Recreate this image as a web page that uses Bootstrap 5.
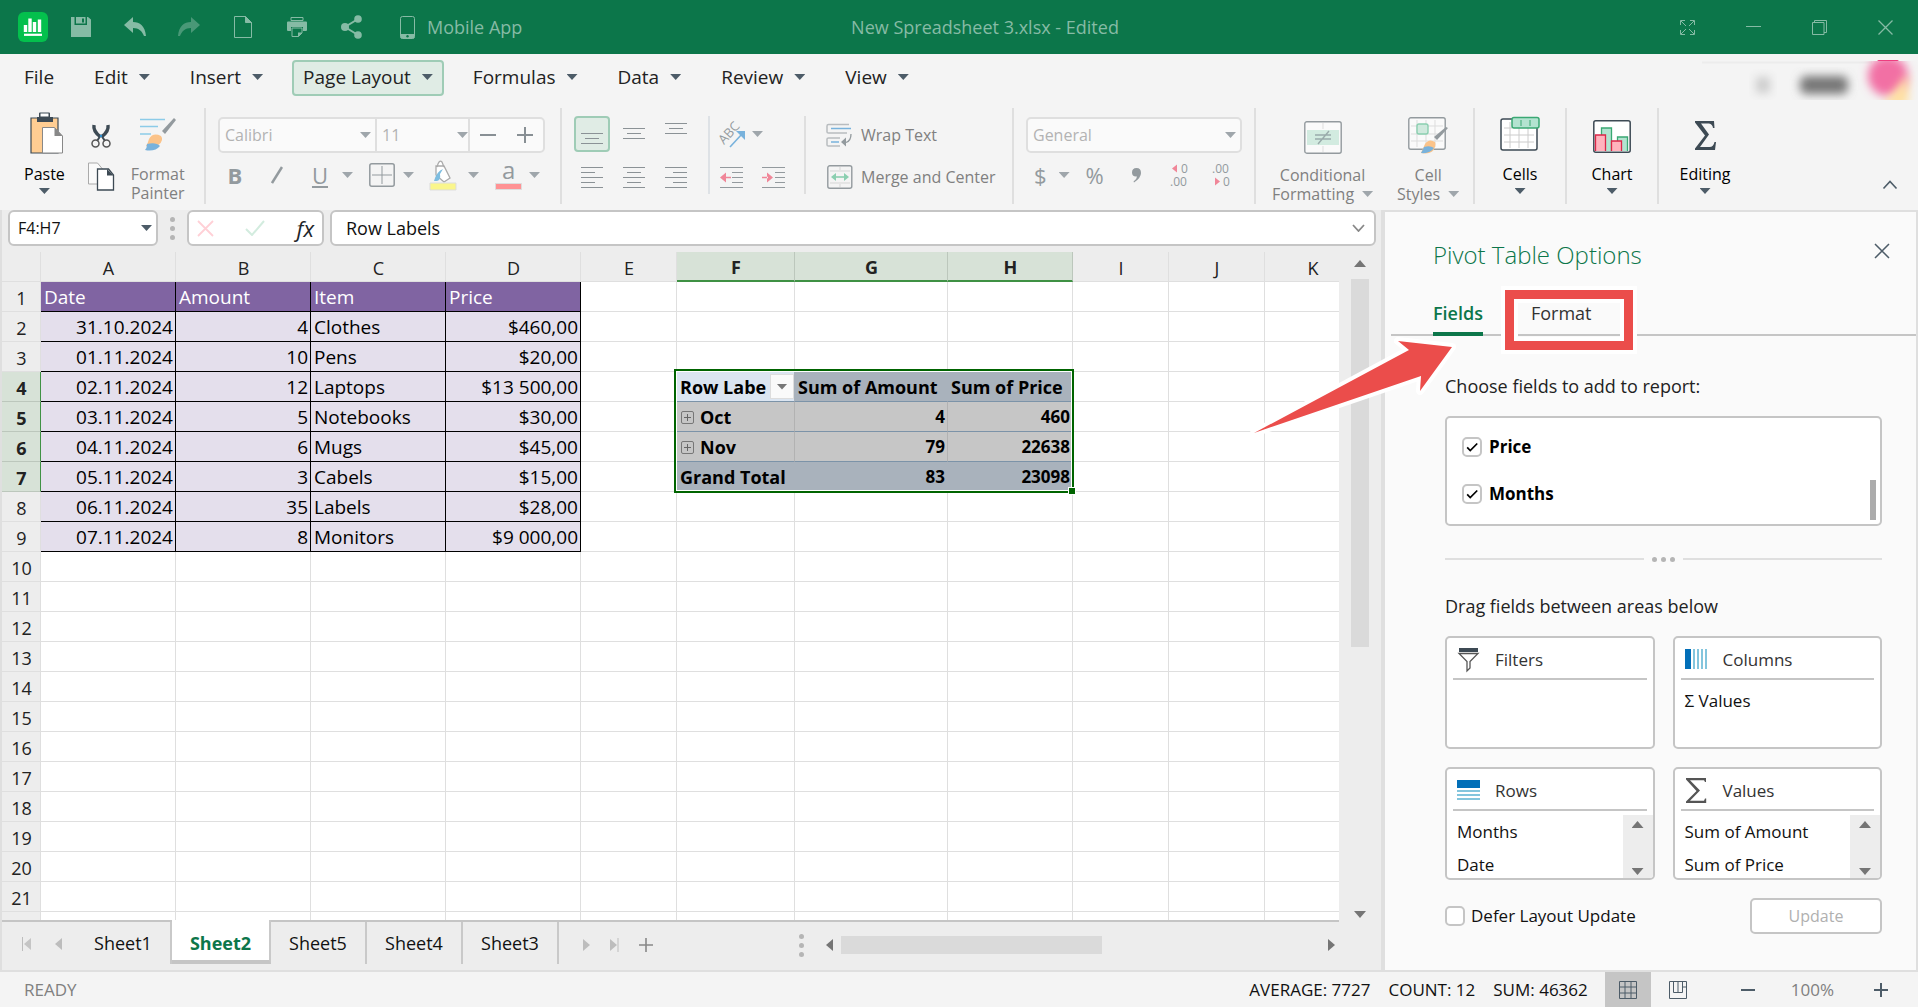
<!DOCTYPE html>
<html lang="en">
<head>
<meta charset="utf-8">
<meta name="viewport" content="width=device-width, initial-scale=1">
<title>New Spreadsheet 3.xlsx</title>
<link rel="stylesheet" href="https://cdn.jsdelivr.net/npm/bootstrap@5.3.0/dist/css/bootstrap.min.css">
<style>
:root{--green:#0c764a;--line:#c5c5c5;--soft:#dfdfdf;--chrome:#f4f4f4;--gutter:#ededed}
body{font-family:"Open Sans","Noto Sans",sans-serif;font-size:18px;line-height:24px;color:#222;background:var(--chrome);overflow:hidden}
button{font-family:inherit}
svg{display:block;flex:none}
.btn{--bs-btn-padding-x:0;--bs-btn-padding-y:0;--bs-btn-font-size:16px;--bs-btn-line-height:19px;--bs-btn-border-radius:4px;--bs-btn-border-width:0;--bs-btn-color:#222}
.caret{width:11px;height:6px;background:#4d5c68;clip-path:polygon(0 0,100% 0,50% 100%);flex:none;display:block}
.off .caret,.caret.off{background:#9fa6ab}
.off{color:#808080}
.titlebar,.menubar,.ribbon,.status,.status-line,.fbar,.sheetbar{flex-shrink:0}
/* title bar */
.titlebar{height:54px;background:var(--green);color:#86bba5;padding:0 0 0 18px}
.titlebar .btn{color:#86bba5}
.side{flex:1 1 0}
.doc-name{padding-left:34px;font-size:18px}
.cell54{width:54px;height:54px}
.cell66{width:66px;height:54px}
/* menu */
.menubar{height:54px;padding:6px 0 0 13px;gap:18px}
.menubar .btn{height:36px;padding:0 10px 2px;border:1px solid transparent;font-size:19px;line-height:24px;gap:11px}
.menubar .btn.current{background:#e0ece5;border:2px solid #9fccb6;padding:0 9px 2px}
/* ribbon */
.ribbon{height:102px}
.grp{height:96px;border-right:2px solid var(--soft);flex:none}
.g-clip{width:206px}.g-font{width:356px;padding:9px 0 0 12px}.g-align{width:146px;padding:8px 0 0 12px}
.g-dir{width:98px;padding:0}.g-wrap{width:208px;padding:9px 0 0 20px}.g-num{width:242px;padding:9px 0 0 12px}
.g-style{width:219px}.g-one{width:92px}.g-short{height:78px;margin-top:8px}
.tool{width:42px;height:36px}
.tool.picked{background:#e0ece5;border:2px solid #9fccb6}
.tool-bold{width:34px;height:36px}.tool-slant{width:50px;height:36px}.tool-under{width:36px;height:36px}
.lbl{font-size:16px;line-height:19px}
.ribbon .lbl-top{margin-top:13px}
.icon-slot{height:44px}
.clip-gap{margin-right:22px}
.cut-copy{gap:14px}
.font-box{height:36px;width:327px;border:2px solid var(--soft);border-radius:5px;background:#fafafa}
.font-box .part{border-right:2px solid var(--soft)}
.part-face{width:157px}.part-size{width:93px}
.num-box{height:36px;width:216px;border:2px solid var(--soft);border-radius:5px;background:#fafafa}
.flat{appearance:none;border:0;background:transparent;width:100%;color:#b3b3b3;font-size:16px;outline:0;padding:0 0 0 5px;opacity:1}
.glyph{font-size:22px;line-height:28px;color:#939a9e}
/* workspace */
.work{border-left:2px solid var(--soft);background:var(--gutter)}
.fbar{height:42px;padding:0 5px 6px 6px}
.fbox{height:36px;background:#fff;border:2px solid var(--line);border-radius:6px}
.fbox input{border:0;outline:0;background:transparent;color:#111;min-width:0}
.name-box{width:150px}.fx-box{width:137px}
.formula-box{margin-left:6px;padding:0 9px 0 14px}
.dots i{width:5px;height:5px;border-radius:50%;background:#b5b5b5;display:block}
.grid-wrap{overflow:hidden;border-bottom:2px solid var(--line);background:#fff}
.sheet{table-layout:fixed;border-collapse:separate;border-spacing:0;width:1358px;line-height:26px;color:#000}
.sheet th,.sheet td{height:30px;padding:0 2px 0 3px;border-right:1px solid var(--soft);border-bottom:1px solid var(--soft);white-space:nowrap;overflow:hidden;vertical-align:middle}
.sheet th{background:var(--gutter);font-weight:400;text-align:center;color:#222;padding-top:2px}
.sheet td{font-size:19px}
.sheet th.hot{background:#d7e2d7;font-weight:700;border-right-color:#bcc7bc}
.sheet thead th.hot{border-bottom:2px solid #3f9144}
.sheet tbody th.hot{border-right:1px solid #3f9144;border-bottom-color:#bcc7bc}
.sheet .ttl{background:#8064a2;color:#fff;border-color:#000}
.sheet .dat{background:#e4dfec;border-color:#000}
.sheet .num{text-align:right}
.sheet .pv{background:#c6c6c6;font-weight:700;font-size:18px;border-right-color:#b2b2b2;border-bottom-color:#7c93a8}
.sheet .pv.num{font-size:17px}
.sheet .pv.band{background:#a9b2bc;border-right-color:#a9b2bc}
.sheet .pv.lead-cell{background:#dbe5f1}
.expander{width:13px;height:13px;border:1px solid #777;border-radius:2px;display:inline-block;vertical-align:0;margin:0 6px 0 1px;background:linear-gradient(#666,#666) center/7px 1px no-repeat,linear-gradient(#666,#666) center/1px 7px no-repeat}
.drop{width:24px;height:25px;background:#fafafa;border:1px solid #ddd}
.drop .caret{background:#777}
.marquee{left:672px;top:117px;width:400px;height:124px;border:2px solid #006400;box-shadow:inset 0 0 0 1px #fff;pointer-events:none}
.marquee::after{content:"";position:absolute;right:-4px;bottom:-4px;width:8px;height:8px;background:#006400;border:1px solid #fff;box-sizing:border-box}
.vscroll{width:42px;gap:12px}
.vthumb{width:18px;height:368px;background:#dadada}
.sheetbar{height:48px}
.tab{height:42px;width:96px;border-right:2px solid #c9c9c9;font-size:18px;color:#111;text-decoration:none;display:flex;align-items:center;justify-content:center}
.tab-nav{width:74px;height:44px}
.tab.active{background:#fff;color:var(--green);font-weight:700;width:99px;border-bottom:4px solid var(--line);margin-top:-2px;height:44px;padding-top:6px}
.hthumb{width:261px;height:18px;background:#dadada}
.tri-u,.tri-d,.tri-l,.tri-r{display:block;background:#757575}
.tri-u,.tri-d{width:12px;height:7px}.tri-l,.tri-r{width:7px;height:12px}
.tri-u{clip-path:polygon(50% 0,100% 100%,0 100%)}.tri-d{clip-path:polygon(0 0,100% 0,50% 100%)}
.tri-l{clip-path:polygon(0 50%,100% 0,100% 100%)}.tri-r{clip-path:polygon(0 0,100% 50%,0 100%)}
.dim{background:#bdbdbd}
.tab-tail{height:46px;padding:0 46px 0 24px}
.tail-gap{margin-left:20px}
.split-dots{margin-left:146px;margin-right:22px}
/* side pane */
.pane{width:537px;border-left:4px solid var(--soft);border-right:2px solid var(--soft);border-top:2px solid var(--soft);background:#fafafa}
.pane h2{font-size:24px;line-height:32px;font-weight:300;color:var(--green);margin:0}
.pane-head{padding:27px 26px 0 48px;height:76px}
.pane-tabs{height:48px;margin-left:6px;padding-left:42px;border-bottom:2px solid var(--line);gap:48px}
.pane-tabs a{color:#333;text-decoration:none;line-height:50px;height:48px}
.pane-tabs a.active{color:var(--green);font-weight:600;border-bottom:4px solid var(--green)}
.pane-body{padding:0 34px 0 60px}
.hint-a{padding:38px 0 18px}.hint-b{padding:2px 0 18px}
.field-list{height:110px;border:2px solid var(--line);border-radius:5px;background:#fff;padding:5px 4px 0 15px;color:#000}
.check{appearance:none;width:20px;height:20px;border:2px solid var(--line);border-radius:5px;background:#fff;margin:0;flex:none}
.check:checked{background:#fff url("data:image/svg+xml,%3Csvg xmlns='http://www.w3.org/2000/svg' viewBox='0 0 16 16'%3E%3Cpath d='M2.500 8.500l3.500 3.500 8-8' fill='none' stroke='%23000' stroke-width='2'/%3E%3C/svg%3E") center/14px no-repeat}
.field-row{height:47px;gap:7px;font-weight:700;font-size:17px}
.field-thumb{width:6px;height:40px;background:#acacac}
.splitter{height:66px}
.rule{height:2px;background:var(--soft)}
.areas{display:grid;grid-template-columns:1fr 1fr;gap:18px}
.area{height:113px;border:2px solid var(--line);border-radius:5px;background:#fff;font-size:17px;color:#111;overflow:hidden}
.area-head{height:42px;border-bottom:2px solid var(--line);margin:0 6px;padding:3px 0 0 4px;gap:14px;color:#333}
.area-head svg{width:24px;height:26px}
.area-list{line-height:33px;padding-left:10px}
.area-scroll{width:30px;margin-top:4px;background:var(--gutter);padding:6px 0}
.pane-foot{margin-top:18px}
.pane-foot label{gap:6px;font-size:17px;color:#111}
.btn.update{width:132px;height:36px;border:2px solid var(--line);background:#fff;color:#b0b0b0;border-radius:5px;opacity:1}
/* callouts drawn over the pane */
.callout{left:116px;top:74px;width:136px;height:68px;border:4px solid #fff;pointer-events:none}
.callout i{display:block;height:100%;border:9px solid #eb4d4b;box-shadow:inset 0 0 0 4px #fff}
.arrow{left:-136px;top:118px;pointer-events:none}
/* status bar */
.status{height:35px;font-size:17px;color:#111;padding-right:10px}
.status .stats{gap:18px;padding-right:17px}
.status-line{height:2px;background:var(--soft)}
.view-btn{width:46px;height:35px}
.view-btn.current{background:#c5c5c5}
</style>
</head>
<body>
<div class="d-flex flex-column vh-100">

<header class="titlebar d-flex align-items-center">
  <div class="side d-flex align-items-center">
    <svg width="30" height="30" viewBox="0 0 30 30"><rect width="30" height="30" rx="6" fill="#04c04d"/><path d="M7.500 13v7M12 6.500V20M16.500 10V20M21.500 7.500V20" stroke="#fff" stroke-width="3.400"/><path d="M6 22.800h18" stroke="#fff" stroke-width="2.200"/></svg>
    <button class="btn cell54 d-flex align-items-center justify-content-center ms-1" aria-label="Save"><svg class="ms-1" width="20" height="20" viewBox="0 0 20 20" fill="currentColor"><path d="M0 0h3.500v8h12.500V0H17l3 2.500V20H0z"/><path d="M5 0h9.500v6.500H5z"/><path d="M11 1.500h2v4h-2z" fill="#0c764a"/></svg></button>
    <button class="btn cell54 d-flex align-items-center justify-content-center" aria-label="Undo"><svg class="ms-1" width="22" height="20" viewBox="0 0 22 20" fill="currentColor"><path d="M0 8L9 0v5c7 0 12 4 13 14h-2c-2-5-5-8-11-8v5z"/></svg></button>
    <button class="btn cell54 d-flex align-items-center justify-content-center opacity-50" aria-label="Redo"><svg class="ms-1" width="22" height="20" viewBox="0 0 22 20" fill="currentColor"><path d="M22 8L13 0v5C6 5 1 9 0 19h2c2-5 5-8 11-8v5z"/></svg></button>
    <button class="btn cell54 d-flex align-items-center justify-content-center" aria-label="New"><svg class="ms-1" width="18" height="22" viewBox="0 0 18 22" fill="none" stroke="currentColor"><path d="M.5.500h11l6 6V21.500H.500z"/><path d="M11.500.500v6h6z" fill="currentColor"/></svg></button>
    <button class="btn cell54 d-flex align-items-center justify-content-center" aria-label="Print"><svg class="ms-1" width="20" height="20" viewBox="0 0 20 20" fill="currentColor"><path d="M4 .5h12v3H4z" fill="none" stroke="currentColor"/><path d="M1 4.500h18q1 0 1 1V13q0 1-1 1h-3v-4H4v4H1q-1 0-1-1V5.500q0-1 1-1z"/><path d="M5 11h10v5l-3.500 3.500H5z" fill="none" stroke="currentColor"/><path d="M15 15.500h-4V20z"/></svg></button>
    <button class="btn cell54 d-flex align-items-center justify-content-center" aria-label="Share"><svg class="ms-1" width="21" height="24" viewBox="0 0 21 24" fill="currentColor"><path d="M17 4L4 12l13 8" fill="none" stroke="currentColor" stroke-width="2"/><circle cx="17" cy="4" r="3.800"/><circle cx="4" cy="12" r="4"/><circle cx="17" cy="20" r="3.800"/></svg></button>
    <button class="btn d-flex align-items-center gap-2 ms-3 ps-1"><svg class="ms-1" width="15" height="23" viewBox="0 0 15 23"><rect x=".5" y=".5" width="14" height="22" rx="2" fill="none" stroke="currentColor"/><path d="M.5 18h14v3q0 1.500-2 1.500h-10q-2 0-2-1.500z" fill="currentColor"/><circle cx="7.500" cy="20.300" r="1.200" fill="#0c764a"/></svg><span class="doc-name ps-1">Mobile App</span></button>
  </div>
  <div class="doc-name">New Spreadsheet 3.xlsx - Edited</div>
  <div class="side d-flex justify-content-end">
    <button class="btn cell66 d-flex align-items-center justify-content-center" aria-label="Full screen"><svg width="15" height="15" viewBox="0 0 15 15" fill="none" stroke="currentColor"><path d="M.5 5V.500H5M10 .5h4.500V5M14.500 10v4.500H10M5 14.500H.500V10M1 1l5 5M14 1L9 6M1 14l5-5M14 14L9 9"/></svg></button>
    <button class="btn cell66 d-flex align-items-center justify-content-center" aria-label="Minimize"><svg width="15" height="2" viewBox="0 0 15 2"><path d="M0 .5h15" stroke="currentColor"/></svg></button>
    <button class="btn cell66 d-flex align-items-center justify-content-center" aria-label="Restore"><svg width="15" height="15" viewBox="0 0 15 15" fill="none" stroke="currentColor"><path d="M.5 2.500h11.500v12H.500zM2.500 2.500v-2h12v12h-2.500"/></svg></button>
    <button class="btn cell66 d-flex align-items-center justify-content-center" aria-label="Close"><svg width="15" height="15" viewBox="0 0 15 15"><path d="M.5.500l14 14M14.500.500l-14 14" stroke="currentColor" stroke-width="1.300"/></svg></button>
  </div>
</header>

<nav class="menubar d-flex align-items-start">
  <button class="btn d-flex align-items-center">File</button>
  <button class="btn d-flex align-items-center">Edit<i class="caret"></i></button>
  <button class="btn d-flex align-items-center">Insert<i class="caret"></i></button>
  <button class="btn current d-flex align-items-center">Page Layout<i class="caret"></i></button>
  <button class="btn d-flex align-items-center">Formulas<i class="caret"></i></button>
  <button class="btn d-flex align-items-center">Data<i class="caret"></i></button>
  <button class="btn d-flex align-items-center">Review<i class="caret"></i></button>
  <button class="btn d-flex align-items-center">View<i class="caret"></i></button>
  <svg class="ms-auto" width="216" height="46" viewBox="0 0 216 46"><defs><filter id="soft" x="-50%" y="-50%" width="200%" height="200%"><feGaussianBlur stdDeviation="5"/></filter><clipPath id="low"><rect y="1" width="216" height="39"/></clipPath></defs><path d="M0 2.500h170" stroke="#ececec" stroke-width="2"/><g clip-path="url(#low)"><rect x="54" y="17" width="14" height="16" fill="#ccc" filter="url(#soft)"/><rect x="98" y="16" width="48" height="18" rx="6" fill="#777" filter="url(#soft)"/><circle cx="186" cy="16" r="20" fill="#f26fa4" filter="url(#soft)"/><path d="M180 46l26-32v32z" fill="#ffe0a0" filter="url(#soft)"/></g><path d="M175 1q11-8 22 0z" fill="#ee3d7f"/></svg>
</nav>

<section class="ribbon d-flex align-items-start">
  <div class="grp g-clip d-flex">
    <button class="btn clip-gap d-flex flex-column align-items-center ps-4"><span class="icon-slot pt-1"><svg class="ms-1" width="34" height="42" viewBox="0 0 34 42"><path d="M2 6h27v35H2z" fill="#ffcd92" stroke="#3d4a54" stroke-width="1.200"/><path d="M10 5V1.500q0-1 1-1h9q1 0 1 1V5h3v5H8V5z" fill="#3d4a54"/><rect x="11.500" y="1.500" width="8" height="3" fill="#fff"/><path d="M13.500 15.500h12l8 8.500v17h-20z" fill="#fff" stroke="#888"/><path d="M25.500 15.500l8 8.500h-8z" fill="#888"/></svg></span><span class="lbl lbl-top text-black">Paste</span><i class="caret mt-1"></i></button>
    <div class="cut-copy me-3 d-flex flex-column align-items-center pt-3">
      <button class="btn" aria-label="Cut"><svg width="20" height="24" viewBox="0 0 20 24"><path d="M3 1q-1 6 6 11.500M17 1q1 6-6 11.500" stroke="#3d4a54" stroke-width="3.400" fill="none"/><path d="M10 11l-4 6M10 11l4 6" stroke="#3d4a54" stroke-width="2"/><circle cx="4.500" cy="19.500" r="3.500" fill="none" stroke="#555" stroke-width="1.500"/><circle cx="15.500" cy="19.500" r="3.500" fill="none" stroke="#555" stroke-width="1.500"/><circle cx="10" cy="12" r="1.200" fill="#2b8fd0"/></svg></button>
      <button class="btn" aria-label="Copy"><svg width="28" height="29" viewBox="0 0 28 29"><path d="M1.500 1h9l5 6v15h-14z" fill="#fafafa" stroke="#aaa"/><path d="M10.500 7h11l5 6v15h-16z" fill="#fff" stroke="#3d4a54" stroke-width="1.300"/><path d="M20 7l6.500 6.500H20z" fill="#3d4a54"/></svg></button>
    </div>
    <button class="btn off d-flex flex-column align-items-center"><span class="icon-slot pt-2"><svg width="37" height="36" viewBox="0 0 37 36"><path d="M1 3.500h25M1 10.500h18M1 18h11" stroke="#8ccbe8" stroke-width="1.500"/><path d="M35 2l-12 13 3 3L37 4z" fill="#939a9e"/><path d="M22 20q-8-4-12 3-1 4-3 7 14 2 16-6 .5-2-1-4z" fill="#fbc389"/><path d="M8 28q9-2 13 2-5 6-15 4 2-2 2-6z" fill="#78b2dc"/></svg></span><span class="lbl lbl-top">Format<br>Painter</span></button>
  </div>

  <div class="grp g-font">
    <div class="font-box d-flex align-items-stretch">
      <label class="part part-face d-flex align-items-center pe-1"><input class="flat" value="Calibri" aria-label="Font" disabled><i class="caret off"></i></label>
      <label class="part part-size d-flex align-items-center"><input class="flat" value="11" aria-label="Font size" disabled><i class="caret off"></i></label>
      <button class="btn flex-fill d-flex align-items-center justify-content-center" aria-label="Smaller"><svg width="16" height="2"><path d="M0 1h16" stroke="#888f94" stroke-width="2"/></svg></button>
      <button class="btn flex-fill d-flex align-items-center justify-content-center" aria-label="Larger"><svg width="16" height="16"><path d="M0 8h16M8 0v16" stroke="#888f94" stroke-width="2"/></svg></button>
    </div>
    <div class="d-flex align-items-center off mt-1">
      <button class="btn tool-bold glyph fw-bold">B</button>
      <button class="btn tool-slant d-flex align-items-center justify-content-center" aria-label="Italic"><svg width="12" height="18"><path d="M1 17L11 1" stroke="#939a9e" stroke-width="2.500"/></svg></button>
      <button class="btn tool-under glyph text-decoration-underline">U</button><i class="caret ms-1"></i>
      <button class="btn tool d-flex align-items-center justify-content-center ms-2" aria-label="Borders"><svg width="26" height="24" viewBox="0 0 26 24"><rect x=".8" y=".8" width="24.400" height="22.400" rx="2" fill="none" stroke="#939a9e" stroke-width="1.500"/><path d="M13 3v18M3 12h20" stroke="#939a9e"/></svg></button><i class="caret"></i>
      <button class="btn tool d-flex align-items-center justify-content-center ms-2" aria-label="Fill colour"><svg width="28" height="32" viewBox="0 0 28 32"><path d="M7 7l8 0 6 12-6 4-8-7zM8 8Q10 0 13 3l2 5" fill="#fff" stroke="#aaa" stroke-width="1.300"/><path d="M14 10q-6 2-9 12h3q4-1 3-7z" fill="#7dbde0"/><path d="M1 24h26v7H1z" fill="#faf68c" stroke="#ddd"/></svg></button><i class="caret ms-1"></i>
      <button class="btn tool d-flex flex-column align-items-center justify-content-center ms-2" aria-label="Text colour"><svg width="27" height="36" viewBox="0 0 27 36"><text x="7" y="22" font-size="24" fill="#939a9e">a</text><path d="M.5 26.500h26v6H.500z" fill="#ff9294" stroke="#ddd"/></svg></button><i class="caret"></i>
    </div>
  </div>

  <div class="grp g-align border-end-0 off" id="alignTools"></div>

  <div class="grp g-dir g-short border-start border-2 off">
    <div class="d-flex align-items-center">
      <button class="btn tool" aria-label="Orientation"><svg class="m-auto" width="38" height="36" viewBox="0 0 38 36"><text x="12" y="29" transform="rotate(-48 12 29)" font-size="13" fill="#939a9e">ABC</text><path d="M18 31L30 18" stroke="#78b2dc" stroke-width="1.600"/><path d="M24 15h9v9z" fill="#78b2dc"/></svg></button><i class="caret"></i>
    </div>
    <div class="d-flex mt-2">
      <button class="btn tool" aria-label="Decrease indent"><svg class="m-auto" width="24" height="24" viewBox="0 0 24 24"><path d="M1 1.500h23M13 6.500h11M13 11.500h11M13 16.500h11M1 21.500h23" stroke="#939a9e"/><path d="M1 11.500l6-5v10zM6 10.800h6v1.500H6z" fill="#f08698"/></svg></button>
      <button class="btn tool" aria-label="Increase indent"><svg class="m-auto" width="24" height="24" viewBox="0 0 24 24"><path d="M1 1.500h23M14 6.500h10M14 11.500h10M14 16.500h10M1 21.500h23" stroke="#939a9e"/><path d="M12 11.500l-6-5v10zM1 10.800h6v1.500H1z" fill="#f08698"/></svg></button>
    </div>
  </div>

  <div class="grp g-wrap off">
    <button class="btn tool w-auto off d-flex align-items-center gap-2"><svg width="27" height="24" viewBox="0 0 27 24" fill="none"><path d="M23 1.500H2.500q-1.500 0-1.500 1.500v6q0 1 1.500 1H21M14 15H2.500Q1 15 1 16v6q0 1 1.500 1H14" stroke="#b8bcbf" stroke-width="1.500"/><path d="M5 5.500h20M5 19h8" stroke="#78b2dc" stroke-width="1.600"/><path d="M25 11q0 7-5 8.500" stroke="#939a9e" stroke-width="1.300"/><path d="M15 19l5-4.500v9z" fill="#939a9e"/></svg>Wrap Text</button>
    <button class="btn tool w-auto off d-flex align-items-center gap-2 mt-1 pt-1"><svg width="27" height="24" viewBox="0 0 27 24" fill="none"><rect x="1.800" y=".8" width="24" height="22.400" rx="2" stroke="#939a9e" stroke-width="1.400"/><path d="M4 6h20M4 18h20M14 2v3M14 19v3" stroke="#d5d5d5"/><path d="M8 12h12" stroke="#8bcfb0" stroke-width="1.600"/><path d="M5 12l5-4v8zM23 12l-5-4v8z" fill="#8bcfb0"/></svg>Merge and Center</button>
  </div>

  <div class="grp g-num off">
    <label class="num-box d-flex align-items-center pe-1"><select class="flat" aria-label="Number format" disabled><option>General</option></select><i class="caret"></i></label>
    <div class="d-flex align-items-center mt-1">
      <button class="btn glyph px-2">$</button><i class="caret ms-1"></i>
      <button class="btn glyph tool ms-1">%</button>
      <button class="btn tool d-flex align-items-center justify-content-center" aria-label="Thousands"><svg width="10" height="15" viewBox="0 0 10 15"><path d="M4.500 0Q9 0 9 5t-7 9.500l-.500-1Q5 11 5 8.500 0 9 0 4.500 0 0 4.500 0z" fill="#939a9e"/></svg></button>
      <button class="btn tool" aria-label="Increase decimal"><svg class="m-auto" width="26" height="30" viewBox="0 0 26 30" font-size="12" fill="#939a9e"><text x="15" y="13">0</text><text x="4" y="26">.00</text><path d="M11 4.500v8L6 8.500z" fill="#f08698"/></svg></button>
      <button class="btn tool" aria-label="Decrease decimal"><svg class="m-auto" width="26" height="30" viewBox="0 0 26 30" font-size="12" fill="#939a9e"><text x="4" y="13">.00</text><text x="15" y="26">0</text><path d="M7 17.500v8l5-4z" fill="#f08698"/></svg></button>
    </div>
  </div>

  <div class="grp g-style d-flex off">
    <button class="btn off text-center px-3"><span class="icon-slot d-flex justify-content-center pt-2"><svg class="mt-1" width="38" height="33" viewBox="0 0 38 33"><rect x=".8" y=".8" width="36.400" height="31.400" rx="2" fill="#fafafa" stroke="#939a9e" stroke-width="1.400"/><path d="M3 9h32v15H3z" fill="#d2ebe0"/><path d="M19 2v6M19 25v6" stroke="#ddd"/><path d="M11 14h16M11 18h16M25 10l-11 13" stroke="#9aa" stroke-width="1.400"/></svg></span><span class="lbl lbl-top d-block">Conditional</span><span class="lbl d-flex align-items-center justify-content-center gap-2">Formatting<i class="caret"></i></span></button>
    <button class="btn off text-center ps-2"><span class="icon-slot d-flex justify-content-center pt-2"><svg width="42" height="38" viewBox="0 0 42 38"><rect x="1.800" y=".8" width="36.400" height="31.400" rx="2" fill="#fafafa" stroke="#939a9e" stroke-width="1.400"/><path d="M10 3v27M19 3v27M28 3v27M4 9h32M4 17h32M4 24h32" stroke="#ddd"/><rect x="10" y="7" width="11" height="10" rx="2" fill="#cfe9dd" stroke="#8bcfb0" stroke-width="1.400"/><path d="M41 11L30 23l-3-3 12-10z" fill="#939a9e"/><path d="M28 25q-6-4-10 2l-4 9q12 2 14-6 1-3 0-5z" fill="#fbc389"/><path d="M17 30q6-2 10 1-4 6-13 5 2-3 3-6z" fill="#78b2dc"/></svg></span><span class="lbl lbl-top d-block">Cell</span><span class="lbl d-flex align-items-center justify-content-center gap-2">Styles<i class="caret"></i></span></button>
  </div>

  <div class="grp g-one"><button class="btn text-black d-flex flex-column align-items-center w-100"><span class="icon-slot pt-2"><svg width="40" height="36" viewBox="0 0 40 36"><rect x="1" y="3" width="36" height="31" rx="2" fill="#fff" stroke="#3d4a54" stroke-width="1.500"/><path d="M10 6v26M19 6v26M28 12v20M4 12h8M4 19h30M4 26h30" stroke="#ccc"/><rect x="12" y="1.500" width="27" height="10.500" rx="2" fill="#b3e3d0" stroke="#3aa873" stroke-width="1.500"/><path d="M21 4v6M30 4v6" stroke="#3aa873"/></svg></span><span class="lbl lbl-top">Cells</span><i class="caret mt-1"></i></button></div>
  <div class="grp g-one"><button class="btn text-black d-flex flex-column align-items-center w-100"><span class="icon-slot pt-2"><svg class="mt-1" width="38" height="33" viewBox="0 0 38 33"><rect x=".8" y=".8" width="36.400" height="31.400" rx="2" fill="#fff" stroke="#3d4a54" stroke-width="1.500"/><path d="M8.500 31V8h10v23M24.500 31V17h10v14" fill="#b3e3d0" stroke="#3aa873" stroke-width="1.300"/><path d="M2.500 31V15h10v16M18.500 31V21h10v10" fill="#ffb3bd" stroke="#dc2648" stroke-width="1.300"/></svg></span><span class="lbl lbl-top">Chart</span><i class="caret mt-1"></i></button></div>
  <div class="grp g-one border-0"><button class="btn text-black d-flex flex-column align-items-center w-100"><span class="icon-slot pt-2"><svg class="mt-1" width="22" height="31" viewBox="0 0 22 31"><path d="M1 1h19l.5 7H19q-.5-4-4-4.500H7l8 11L6 27h9.500q4 0 5-5H22l-1 8H1v-1.500L11 15.500 1 2.500z" fill="#3d4a54"/></svg></span><span class="lbl lbl-top">Editing</span><i class="caret mt-1"></i></button></div>
  <button class="btn ms-auto px-3 pb-3 me-1 align-self-end" aria-label="Collapse ribbon"><svg class="mb-1" width="16" height="10" viewBox="0 0 16 10"><path d="M1.500 8.500L8 1.500l6.500 7" fill="none" stroke="#4d5c68" stroke-width="1.600"/></svg></button>
</section>

<main class="d-flex flex-fill overflow-hidden">
  <div class="work d-flex flex-column flex-fill overflow-hidden">
    <div class="fbar d-flex">
      <label class="fbox name-box d-flex align-items-center px-2 pe-1"><input class="w-100 p-0 fs-6" value="F4:H7" aria-label="Name box"><i class="caret"></i></label>
      <span class="dots d-flex flex-column align-items-center justify-content-center gap-1 px-2 mx-1"><i></i><i></i><i></i></span>
      <div class="fbox fx-box d-flex align-items-center justify-content-between px-2">
        <svg width="17" height="17"><path d="M1 1l15 15M16 1L1 16" stroke="#ffd0d6" stroke-width="1.800"/></svg>
        <svg width="20" height="16"><path d="M1 9l6 6L19 1" fill="none" stroke="#d3ecdf" stroke-width="2"/></svg>
        <span class="glyph fst-italic text-dark">fx</span>
      </div>
      <label class="fbox formula-box flex-fill d-flex align-items-center"><input class="flex-fill p-0" value="Row Labels" aria-label="Formula"><svg width="13" height="8"><path d="M1 1l5.500 6L12 1" fill="none" stroke="#888" stroke-width="1.800"/></svg></label>
    </div>
    <div class="d-flex flex-fill overflow-hidden">
      <div class="grid-wrap flex-fill position-relative">
        <table class="sheet" id="sheet"></table>
        <div class="marquee position-absolute"></div>
      </div>
      <div class="vscroll d-flex flex-column align-items-center flex-shrink-0 pt-2 pb-1"><i class="tri-u"></i><i class="vthumb"></i><i class="tri-d mt-auto"></i></div>
    </div>
    <div class="sheetbar d-flex align-items-start">
      <div class="tab-nav d-flex align-items-center ps-3"><svg class="ms-1" width="9" height="14"><path d="M.5 0v14" stroke="#bdbdbd"/><path d="M9 1v12L2 7z" fill="#c5c5c5"/></svg><i class="tri-l dim ms-4"></i></div>
      <a class="tab" href="#">Sheet1</a><a class="tab active position-relative" href="#">Sheet2</a><a class="tab" href="#">Sheet5</a><a class="tab" href="#">Sheet4</a><a class="tab" href="#">Sheet3</a>
      <div class="tab-tail d-flex align-items-center flex-fill"><i class="tri-r dim"></i><i class="tri-r dim tail-gap"></i><svg width="2" height="14"><path d="M1 0v14" stroke="#bdbdbd"/></svg><svg class="tail-gap" width="14" height="14"><path d="M0 7h14M7 0v14" stroke="#888" stroke-width="1.600"/></svg>
        <span class="dots split-dots d-flex flex-column gap-1"><i></i><i></i><i></i></span><i class="tri-l me-2"></i><i class="hthumb"></i><i class="tri-r ms-auto"></i></div>
    </div>
  </div>

  <aside class="pane position-relative flex-shrink-0">
    <div class="pane-head d-flex justify-content-between align-items-start"><h2>Pivot Table Options</h2><button class="btn" aria-label="Close pane"><svg class="mt-1" width="16" height="16"><path d="M1 1l14 14M15 1L1 15" stroke="#4d5c68" stroke-width="1.500"/></svg></button></div>
    <nav class="pane-tabs d-flex position-relative"><a class="active" href="#">Fields</a><a href="#">Format</a></nav>
    <div class="position-absolute callout"><i></i></div>
    <svg class="position-absolute arrow" width="220" height="120" viewBox="0 0 220 120"><path d="M5 103L160 20 149 11 203 17 171 61 172 46Z" fill="#eb4d4b" stroke="#fff" stroke-width="8" stroke-linejoin="round" paint-order="stroke"/></svg>
    <div class="pane-body">
      <div class="hint-a">Choose fields to add to report:</div>
      <div class="field-list d-flex justify-content-between">
        <div><label class="field-row d-flex align-items-center"><input class="check" type="checkbox" checked>Price</label><label class="field-row d-flex align-items-center"><input class="check" type="checkbox" checked>Months</label></div>
        <i class="field-thumb align-self-end mb-1"></i>
      </div>
      <div class="splitter d-flex align-items-center gap-2"><span class="rule flex-fill"></span><span class="dots d-flex gap-1"><i></i><i></i><i></i></span><span class="rule flex-fill"></span></div>
      <div class="hint-b">Drag fields between areas below</div>
      <div class="areas">
        <div class="area"><div class="area-head d-flex align-items-center"><svg viewBox="0 0 24 26"><path d="M2 1h19v4H2z" fill="#3d4a54"/><path d="M2 6.500h19L13 14.500v6.500l-3 3V14.500z" fill="#fff" stroke="#555" stroke-width="1.300"/></svg>Filters</div></div>
        <div class="area"><div class="area-head d-flex align-items-center"><svg viewBox="0 0 24 26"><path d="M0 2h6v20H0z" fill="#026fb8"/><path d="M9 2v20M13 2v20M17 2v20M21 2v20" stroke="#83c5dd" stroke-width="2"/></svg>Columns</div><div class="area-list pt-1">Σ Values</div></div>
        <div class="area"><div class="area-head d-flex align-items-center"><svg viewBox="0 0 24 26"><path d="M0 2h23v8H0z" fill="#026fb8"/><path d="M0 13h23M0 17h23M0 21h23" stroke="#83c5dd" stroke-width="2"/></svg>Rows</div><div class="d-flex justify-content-between"><div class="area-list pt-1">Months<br>Date</div><div class="area-scroll d-flex flex-column align-items-center justify-content-between"><i class="tri-u"></i><i class="tri-d"></i></div></div></div>
        <div class="area"><div class="area-head d-flex align-items-center"><svg viewBox="0 0 24 26"><path d="M1 0h20v4h-1l-1-1.800H5L15 12.500 5 22.800h14l1-2.300h1.200V25H1v-1.500L11.500 13 1 1.500z" fill="#555"/></svg>Values</div><div class="d-flex justify-content-between"><div class="area-list pt-1">Sum of Amount<br>Sum of Price</div><div class="area-scroll d-flex flex-column align-items-center justify-content-between"><i class="tri-u"></i><i class="tri-d"></i></div></div></div>
      </div>
      <div class="pane-foot d-flex align-items-center justify-content-between"><label class="d-flex align-items-center"><input class="check" type="checkbox">Defer Layout Update</label><button class="btn update" disabled>Update</button></div>
    </div>
  </aside>
</main>

<div class="status-line"></div>
<footer class="status d-flex align-items-center">
  <span class="off ps-4 me-auto">READY</span>
  <div class="stats d-flex"><span>AVERAGE: 7727</span><span>COUNT: 12</span><span>SUM: 46362</span></div>
  <button class="btn view-btn current rounded-0 d-flex align-items-center justify-content-center" aria-label="Normal view"><svg width="18" height="18" fill="none" stroke="#4d5c68"><path d="M.5.500h17v17H.500zM6 .5v17M12 .5v17M.5 6h17M.5 12h17"/></svg></button>
  <button class="btn view-btn d-flex align-items-center justify-content-center ms-1" aria-label="Page view"><svg width="18" height="18" fill="none" stroke="#4d5c68"><path d="M.5.500h17v17H.500zM4.500.500v11h9V.500M9 .5v11M13.500 6h4"/></svg></button>
  <button class="btn view-btn d-flex align-items-center justify-content-center ms-4" aria-label="Zoom out"><svg width="14" height="2"><path d="M0 1h14" stroke="#4d5c68" stroke-width="2"/></svg></button>
  <span class="text-center off px-3 ms-1 me-2">100%</span>
  <button class="btn view-btn d-flex align-items-center me-1 ps-3" aria-label="Zoom in"><svg width="14" height="14"><path d="M0 7h14M7 0v14" stroke="#4d5c68" stroke-width="2"/></svg></button>
</footer>
</div>

<script>
const lineIcon = rows => '<svg class="m-auto" width="24" height="24" viewBox="0 0 24 24"><path d="' +
  rows.map(([x1, x2, y]) => `M${x1} ${y}H${x2}`).join('') + '" stroke="#8b9296"/></svg>';
const aligns = [
  ['Bottom', [[1,23,11.5],[5,19,16.5],[1,23,21.5]]], ['Middle', [[1,23,6.5],[5,19,11.5],[1,23,16.5]]], ['Top', [[1,23,1.5],[5,19,6.5],[1,23,11.5]]],
  ['Left', [[1,23,1.5],[1,15,6.5],[1,23,11.5],[1,15,16.5],[1,23,21.5]]],
  ['Centre', [[1,23,1.5],[5,19,6.5],[1,23,11.5],[5,19,16.5],[1,23,21.5]]],
  ['Right', [[1,23,1.5],[9,23,6.5],[1,23,11.5],[9,23,16.5],[1,23,21.5]]]
];
const alignBtn = ([name, rows], i) => `<button class="btn tool${i === 0 ? ' picked' : ''} d-flex align-items-center" style="width:${i % 3 ? 42 : 36}px;margin-right:${i % 3 ? 0 : 3}px" aria-label="${name}">${lineIcon(rows)}</button>`;
document.getElementById('alignTools').innerHTML =
  `<div class="d-flex">${aligns.slice(0, 3).map(alignBtn).join('')}</div><div class="d-flex mt-2">${aligns.slice(3).map((a, i) => alignBtn(a, i + 3)).join('')}</div>`;

const widths = [39,135,135,135,135,96,118,153,125,96,96,96];
const letters = 'ABCDEFGHIJK'.split('');
const orders = [['Date','Amount','Item','Price'],['31.10.2024','4','Clothes','$460,00'],['01.11.2024','10','Pens','$20,00'],['02.11.2024','12','Laptops','$13 500,00'],['03.11.2024','5','Notebooks','$30,00'],['04.11.2024','6','Mugs','$45,00'],['05.11.2024','3','Cabels','$15,00'],['06.11.2024','35','Labels','$28,00'],['07.11.2024','8','Monitors','$9 000,00']];
const pivot = [['Row Labe','Sum of Amount','Sum of Price'],['Oct','4','460'],['Nov','79','22638'],['Grand Total','83','23098']];
let html = '<colgroup>' + widths.map(w => `<col style="width:${w}px">`).join('') + '</colgroup><thead><tr><th></th>' +
  letters.map((l, i) => `<th${i > 4 && i < 8 ? ' class="hot"' : ''}>${l}</th>`).join('') + '</tr></thead><tbody>';
for (let r = 0; r < 21; r++) {
  html += `<tr><th${r > 2 && r < 7 ? ' class="hot"' : ''}>${r + 1}</th>`;
  for (let c = 0; c < 11; c++) {
    if (r < 9 && c < 4) html += `<td class="${r ? 'dat' : 'ttl'}${r && c !== 2 ? ' num' : ''}">${orders[r][c]}</td>`;
    else if (r > 2 && r < 7 && c > 4 && c < 8) {
      const p = r - 3, q = c - 5, v = pivot[p][q];
      const cls = 'pv' + (p % 3 === 0 ? ' band' : '') + (p && q ? ' num' : '') + (!p && !q ? ' lead-cell pe-0' : '');
      const body = !p && !q ? `<span class="d-flex align-items-center justify-content-between">${v}<button class="btn rounded-0 drop d-flex align-items-center justify-content-center" aria-label="Filter"><i class="caret"></i></button></span>`
        : (!q && p % 3 ? '<i class="expander"></i>' : '') + v;
      html += `<td class="${cls}">${body}</td>`;
    } else html += '<td></td>';
  }
  html += '</tr>';
}
html += '<tr><th></th>' + '<td></td>'.repeat(11) + '</tr>';
document.getElementById('sheet').innerHTML = html + '</tbody>';
</script>
<script src="https://cdn.jsdelivr.net/npm/bootstrap@5.3.0/dist/js/bootstrap.bundle.min.js"></script>
</body>
</html>
